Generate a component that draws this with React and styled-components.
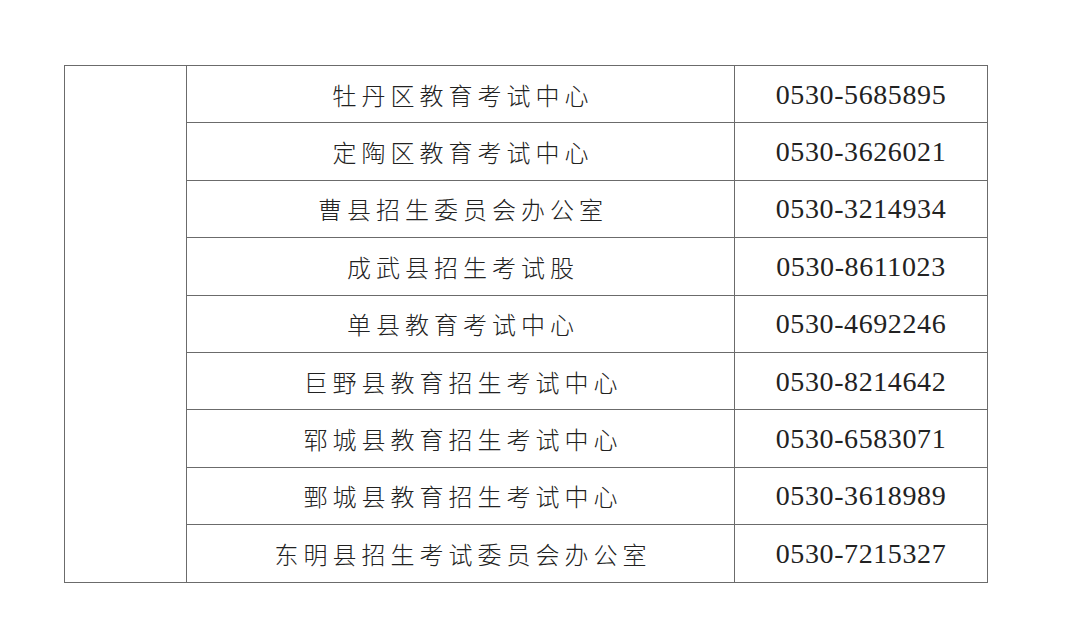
import React from "react";
import styled, { createGlobalStyle } from "styled-components";

const GlobalStyle = createGlobalStyle`
  html, body {
    margin: 0;
    padding: 0;
    background: #ffffff;
  }
`;

const Page = styled.div`
  width: 1080px;
  height: 634px;
  padding: 65px 0 0 64px;
  box-sizing: border-box;
  background: #fff;
`;

const Table = styled.table`
  border-collapse: collapse;
  table-layout: fixed;
  width: 923px;
  color: #222;
`;

const Col = styled.col`
  width: ${p => p.$w}px;
`;

const Cell = styled.td`
  border: 1px solid #6b6b6b;
  height: 57.4px;
  padding: 0;
  text-align: center;
  vertical-align: middle;
  box-sizing: border-box;
`;

const NameCell = styled(Cell)`
  font-family: "Noto Sans CJK SC", sans-serif;
  font-weight: 300;
  font-size: 24px;
  letter-spacing: 5px;
  padding-left: 5px;
`;

const PhoneCell = styled(Cell)`
  font-family: "Liberation Serif", serif;
  font-size: 28px;
  letter-spacing: 0.6px;
  padding-top: 1px;
`;

const offices = [
  { name: "牡丹区教育考试中心", phone: "0530-5685895" },
  { name: "定陶区教育考试中心", phone: "0530-3626021" },
  { name: "曹县招生委员会办公室", phone: "0530-3214934" },
  { name: "成武县招生考试股", phone: "0530-8611023" },
  { name: "单县教育考试中心", phone: "0530-4692246" },
  { name: "巨野县教育招生考试中心", phone: "0530-8214642" },
  { name: "郓城县教育招生考试中心", phone: "0530-6583071" },
  { name: "鄄城县教育招生考试中心", phone: "0530-3618989" },
  { name: "东明县招生考试委员会办公室", phone: "0530-7215327" }
];

const App = () => {
  return (
    <Page>
      <GlobalStyle />
      <Table>
        <colgroup>
          <Col $w={122} />
          <Col $w={548} />
          <Col $w={253} />
        </colgroup>
        <tbody>
          {offices.map((item, i) => (
            <tr key={item.phone}>
              {i === 0 && <Cell rowSpan={offices.length} />}
              <NameCell>{item.name}</NameCell>
              <PhoneCell>{item.phone}</PhoneCell>
            </tr>
          ))}
        </tbody>
      </Table>
    </Page>
  );
};

export default App;
